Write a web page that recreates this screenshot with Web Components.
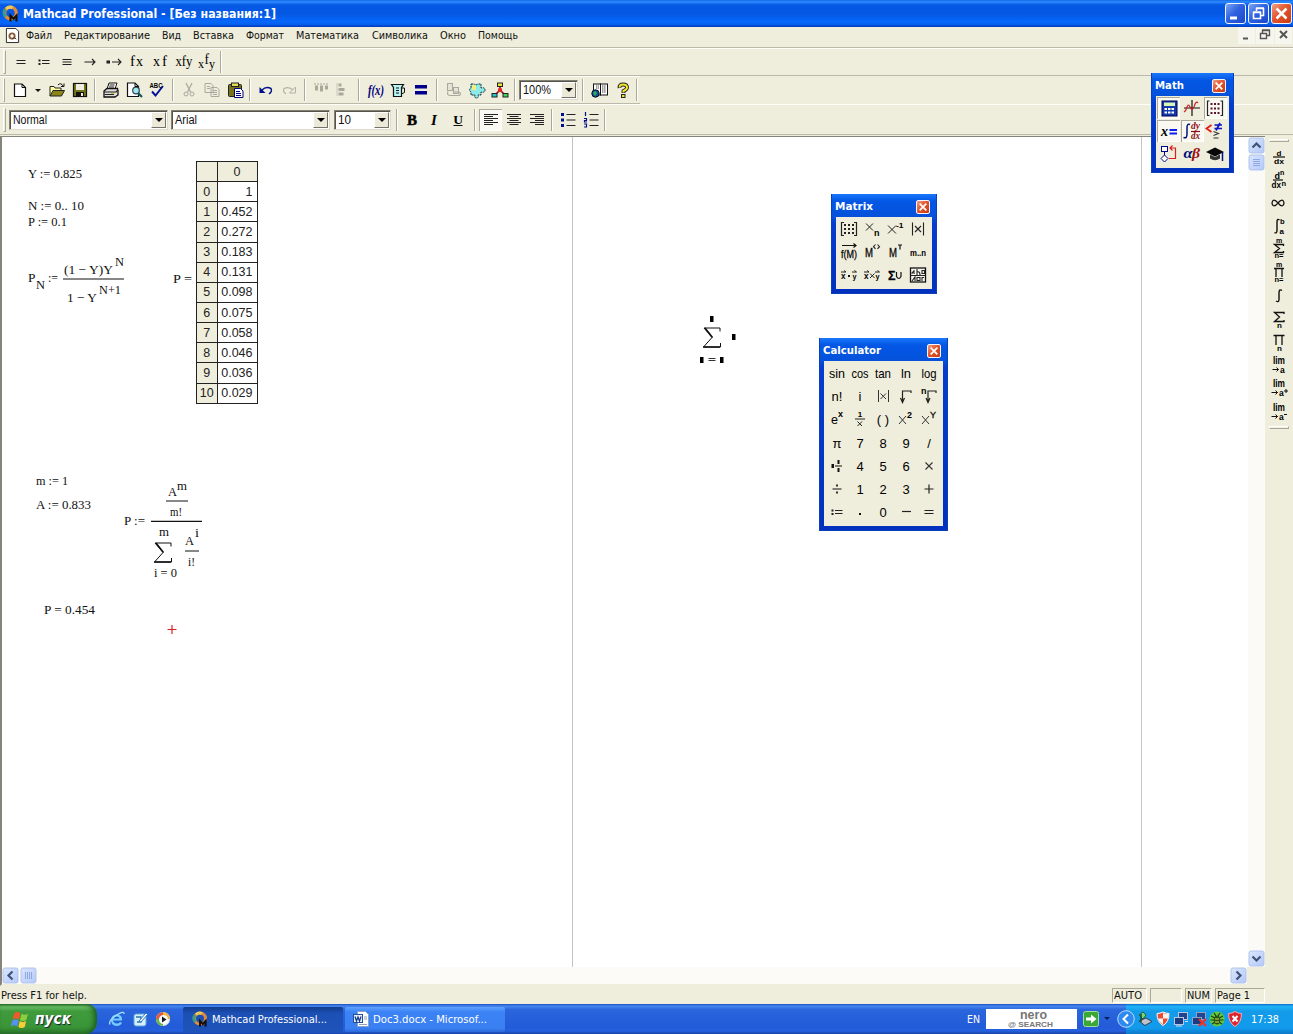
<!DOCTYPE html>
<html lang="ru">
<head>
<meta charset="utf-8">
<title>Mathcad Professional</title>
<style>html,body{margin:0;padding:0;overflow:hidden;background:#efeddd}</style>
</head>
<body>
<mathcad-app></mathcad-app>
<script>
const UI = '"DejaVu Sans Condensed","DejaVu Sans",sans-serif';
const SANS = '"Liberation Sans",sans-serif';
const SERIF = '"Liberation Serif",serif';

/* SVG text with a fixed advance width */
const t = (x, y, s, size, w, o = '') =>
  `<text x="${x}" y="${y}" font-size="${size}" ${w ? `textLength="${w}" lengthAdjust="spacingAndGlyphs"` : ''} ${o}>${s}</text>`;
const mid = 'text-anchor="middle"';
const bold = 'font-weight="bold"';
const ln = (d, c = '#111', w = 1, o = '') => `<path d="${d}" fill="none" stroke="${c}" stroke-width="${w}" ${o}/>`;
const bx = (x, y, w, h, f, s = 'none', o = '') => `<rect x="${x}" y="${y}" width="${w}" height="${h}" fill="${f}" stroke="${s}" ${o}/>`;
const sf = `font-family='${SERIF}'`;

/* every icon is drawn on a 22 x 22 board centred on 11,11 */
const ICONS = {
  eq: ln('M6.500 9.500h9M6.500 12.500h9', '#222', 1.2),
  def: ln('M9 9.500h7.500M9 12.500h7.500', '#222', 1.2) + bx(5.5, 8.5, 2, 2, '#222') + bx(5.5, 12, 2, 2, '#222'),
  equiv: ln('M6.500 8.500h9M6.500 11h9M6.500 13.500h9', '#222', 1.1),
  arrow: ln('M5.500 11h10.500M13 8l3 3l-3 3', '#222', 1.1),
  dotarrow: bx(3.5, 9.5, 3.5, 3, '#222') + ln('M9 11h9M15 8l3 3l-3 3', '#222', 1.1),
  fx: t(4, 15, 'f', 14, 5, sf) + t(10, 15, 'x', 14, 7, sf), xf: t(4, 15, 'x', 14, 7, sf) + t(13, 15, 'f', 14, 5, sf),
  xfy: t(2.500, 15, 'xfy', 14, 17, sf),
  xfy2: t(2, 17, 'x', 13, 6, sf) + t(8.500, 13, 'f', 14, 4.500, sf) + t(13, 17, 'y', 13, 6, sf),
  new: `<path d="M5.500 5h7.500l3.500 3.500v9h-11z" fill="#fff" stroke="#111" stroke-width="1.200"/>` + ln('M13 5v3.500h3.500'),
  dd: '<path d="M8 10h6l-3 3z" fill="#111"/>',
  open: `<path d="M4 17V7.500h4l1 1.500h6v3" fill="#ffffa0" stroke="#222"/><path d="M4 17l3-5.500h11.500L15.500 17z" fill="#8a8418" stroke="#222"/>` + ln('M12 6q3-3 5 1M18 4.500v3h-3'),
  save: bx(4.500, 4.500, 13, 13, '#74741c', '#111', 'stroke-width="1.200"') + bx(7, 5, 8, 6, '#efeddd') + bx(7, 13, 8, 4.500, '#111') + bx(12, 14, 2, 3, '#efeddd'),
  print: `<path d="M7 10l2-6h8l-2 6" fill="#fff" stroke="#111"/><path d="M4 12l3-2.500h10.500L18 12v4l-3 2H4z" fill="#ddd" stroke="#111" stroke-width="1.300"/>` + ln('M9.500 6h5M9 8h5M4 13h12l2-2M5 15.500h9', '#222', 1.200) + bx(11, 14, 3, 1, '#c9c920'),
  preview: `<path d="M4.500 4h7.500l3.500 3.500V17.500h-11z" fill="#fff" stroke="#111" stroke-width="1.200"/><circle cx="13" cy="11.500" r="3.300" fill="#9fe8ee" stroke="#345" stroke-width="1.200"/>` + ln('M15 14l4 4', '#155', 2.200) + ln('M12 4v3.500h3.500'),
  spell: t(3.500, 8.500, 'ABC', 6.500, 13, bold) + ln('M6 12.500l3.500 4L17 7', '#00109c', 1.900),
  cut: ln('M8 4l4.500 9M14 4l-4.500 9', '#aaa89c', 1.200) + '<circle cx="8" cy="15" r="2" fill="none" stroke="#aaa89c"/><circle cx="14" cy="15" r="2" fill="none" stroke="#aaa89c"/>',
  copy: '<path d="M4 4.500h6l2 2v7H4zM10 8.500h6l2 2v7h-8z" fill="#efeddd" stroke="#aaa89c"/>' + ln('M6 7.500h3M6 9.500h3M12 11.500h4M12 13.500h4M12 15.500h4', '#aaa89c'),
  paste: bx(4.500, 5.500, 13, 12, '#77731b', '#222', 'rx="1"') + bx(7.500, 4, 7, 3.500, '#e6df55', '#222') + '<path d="M10.500 9.500h6l2.500 2.500v6.500h-8.500z" fill="#fff" stroke="#000080"/>' + ln('M12 12.500h4M12 14.500h5M12 16.500h5', '#000080'),
  undo: ln('M7 11q4-4 9-1.500q1.500 3-2 5.500', '#00108c', 1.400) + '<path d="M4.500 8v6h6z" fill="#00108c"/>',
  redo: ln('M15 11q-4-4-9-1.500q-1.500 3 2 5.500', '#b4b2a6', 1.200) + '<path d="M17.500 8v6h-6z" fill="none" stroke="#b4b2a6"/>',
  alh: ln('M4 5h14', '#aaa89c', 1.200, 'stroke-dasharray="2 1"') + bx(5, 6.500, 3, 5, '#aaa89c') + bx(10, 6.500, 3, 6, '#aaa89c') + bx(15, 6.500, 3, 4, '#aaa89c'),
  alv: bx(6.500, 4.500, 3, 3, '#aaa89c') + bx(6.500, 9, 6, 3, '#aaa89c') + bx(6.500, 13.500, 5, 3, '#aaa89c') + ln('M5 4v13', '#c8c6ba'),
  func: t(3, 15.500, 'f(x)', 14, 16, `${sf} font-weight="bold" font-style="italic" fill="#00007c"`),
  cup: '<path d="M4.500 5.500h12l-2 3v9h-8v-9z" fill="#b8f4f4" stroke="#111" stroke-width="1.200"/>' + ln('M14.500 9h3v4.500l-3 1.500M9 9h3M9 11.500h3M9 14h3'),
  calc: bx(5, 6, 12, 3.500, '#00008c') + bx(5, 12, 12, 3.500, '#00008c'),
  link: bx(4.500, 4.500, 5, 7, '#e5e3d7', '#aaa89c') + bx(10.500, 8.500, 5, 6, '#e5e3d7', '#aaa89c') + ln('M5 12.500q-2 4 3 4h8q3-2 0-3.500h-5', '#aaa89c', 1.200),
  puzzle: '<path d="M5 5h3.500q1.500 2 3 0H15v4q4-1 4 2t-4 2v3h-3q1 3-1.500 3T9 16H5v-3q-3-2 0-4z" fill="#8fe9e4" stroke="#134" stroke-dasharray="2 .7"/><path d="M6 6h4v5H6z" fill="#f0f080"/>',
  tree: ln('M11 6v5M11 11l-5 5M11 11l5 5', '#8c1111', 1.600) + bx(8.500, 4, 5, 3.500, '#f2e33c', '#222') + bx(3, 14.500, 5, 3.500, '#24c8c8', '#222') + bx(14, 14.500, 5, 3.500, '#42d35a', '#222') + '<circle cx="11" cy="11" r="2.200" fill="#e42828"/>',
  book: bx(4.500, 5, 7, 11, '#fff', '#111') + bx(11.500, 5, 7, 11, '#fff', '#111') + ln('M13 7h4M13 9h4M13 11h4M13 13h4M7 7h3M7 9h3', '#444', 1, 'stroke-dasharray="1.500 .6"') + '<circle cx="6.500" cy="14.500" r="3.700" fill="#174c93" stroke="#012"/><path d="M4 14l2-2 2 2-2 3z" fill="#2cb35a"/>',
  help: ln('M7.500 9Q7 5.500 11 5.500t4 3Q15 10.500 11.500 12v2', '#222', 3.800) + ln('M7.800 8.500Q7 5.500 11 5.500t4 3Q15 10.500 11.500 12v1.500', '#f3e52d', 2) + bx(9.500, 15.500, 3.500, 3, '#f3e52d', '#222'),
  b: t(11, 15.500, 'B', 15, 0, `${sf} ${bold} ${mid} stroke="#000" stroke-width=".5"`),
  i: t(11, 15.500, 'I', 15, 0, `${sf} ${bold} ${mid} font-style="italic"`),
  u: t(11, 14.500, 'U', 13.500, 0, `${sf} ${bold} ${mid}`) + bx(6.500, 16, 9, 1, '#111'),
  left: ln('M4 5.500h14M4 7.500h9M4 9.500h14M4 11.500h9M4 13.500h14M4 15.500h9', '#222'),
  center: ln('M4 5.500h14M6.500 7.500h9M4 9.500h14M6.500 11.500h9M4 13.500h14M6.500 15.500h9', '#222'),
  right: ln('M4 5.500h14M9 7.500h9M4 9.500h14M9 11.500h9M4 13.500h14M9 15.500h9', '#222'),
  bul: bx(4, 4, 3, 3, '#00108c') + bx(4, 9.500, 3, 3, '#00108c') + bx(4, 15, 3, 3, '#00108c') + ln('M9.500 5.500h9M9.500 11h9M9.500 16.500h9', '#222', 1.200),
  num: ln('M5.500 3v4M4 9.500h2.500v2h-2v1.500h2.500M4 15h2.500v3H4', '#00108c', 1.200) + ln('M9.500 5.500h9M9.500 11h9M9.500 16.500h9', '#222', 1.200),

  dx: t(11, 9.500, 'd', 8, 0, `${mid} ${bold}`) + ln('M5 11h12', '#111', 1.200) + t(11, 18, 'dx', 8, 10, `${mid} ${bold}`),
  dnx: t(6.500, 9.500, 'd', 9, 0, bold) + t(12, 6, 'n', 7, 0, bold) + ln('M5 11h10', '#111', 1.200) + t(3.500, 19, 'dx', 8.500, 9.500, bold) + t(13.500, 16.500, 'n', 7.500, 0, bold),
  inf: ln('M11 11Q8 7.300 6 8.500q-2 2.500 0 5Q8 14.700 11 11Q14 7.300 16 8.500q2 2.500 0 5Q14 14.700 11 11', '#111', 1.200, 'transform="translate(-1 0)"'),
  intab: ln('M11.500 5Q9 3 9 7v8q0 4-2.500 2.500', '#111', 1.400) + t(12, 9, 'b', 7.500, 0, bold) + t(11.500, 19, 'a', 8, 0, bold),
  summn: t(11, 5, 'm', 7, 0, `${mid} ${bold}`) + ln('M15.500 8V6.500h-9l5 4l-5 4h9V13', '#111', 1.300) + t(11, 20, 'n=', 7, 9, `${mid} ${bold}`),
  prodmn: t(11, 5, 'm', 7, 0, `${mid} ${bold}`) + ln('M6 6.500h10M8 7v8M14 7v8', '#111', 1.300) + t(11, 20, 'n=', 7, 9, `${mid} ${bold}`),
  int: ln('M14 5.500Q11 3.500 11 8v6q0 4-3 2', '#111', 1.400),
  sumn: ln('M16 6V4.500H6.500l5 4.500l-5 4.500H16V12', '#111', 1.300) + t(11.500, 20, 'n', 8, 0, `${mid} ${bold}`),
  prodn: ln('M5.500 4.500h11M8 5v9M14 5v9', '#111', 1.300) + t(11.500, 20, 'n', 8, 0, `${mid} ${bold}`),
  lim: t(5, 10, 'lim', 10, 12, bold) + ln('M4.500 15.500h6M8.500 13.500l2 2l-2 2') + t(12, 18.500, 'a', 8.500, 0, bold),
  limp: t(5, 10, 'lim', 10, 12, bold) + ln('M3.500 15.500h6M7.500 13.500l2 2l-2 2M16 14h4M18 12v4') + t(11, 18.500, 'a', 8.500, 0, bold),
  limm: t(5, 10, 'lim', 10, 12, bold) + ln('M3.500 15.500h6M7.500 13.500l2 2l-2 2M16 13.500h3') + t(11, 18.500, 'a', 8.500, 0, bold),

  mcalc: bx(4, 4, 15, 15, '#123aa8', '#000050') + bx(6, 5.500, 11, 3.500, '#d9f5b6') + [6.500, 10, 13.500].map(x => [11, 14.500].map(y => bx(x, y, 2.500, 2, '#fff')).join('')).join(''),
  mgraph: ln('M11 3v16M3 11h16', '#111', 1.200) + ln('M3 15q2-1 3-5q1.500-4 3 0q2 5 4 0q2-7 4-4', '#d02424', 1.200),
  mmat: ln('M5.500 4H3.500v14.500h2M16.500 4h2v14.500h-2', '#222', 1.200) + [6.500, 10, 13.500].map(x => [6, 10.500, 15].map(y => bx(x, y, 2, 2, '#5b1530')).join('')).join(''),
  meq: t(3, 15.500, 'x', 14, 7, `${sf} font-style="italic" ${bold}`) + ln('M11.500 10h7.500M11.500 13.500h7.500', '#0c1df2', 1.900),
  mint: ln('M9 4.500Q6 3 6 8v6q0 5-3.500 3.500', '#00107c', 1.500) + t(10, 9, 'dy', 10, 9, `${sf} font-style="italic" ${bold} fill="#8d1010"`) + ln('M10 11.500h9', '#8d1010', 1.200) + t(10, 19, 'dx', 10, 9, `${sf} font-style="italic" ${bold} fill="#8d1010"`),
  mbool: ln('M7.500 5l-5 3.500l5 3.500', '#df1d1d', 1.800) + ln('M10.500 5h7.500M10.500 8.500h7.500M16 3l-4 7.500', '#0817c8', 1.700) + ln('M9.500 11.500l5 2l-5 2M9.500 18h5', '#333', 1.100),
  mprog: bx(3.500, 3.500, 6, 5, '#fff', '#000a90') + '<path d="M6.500 12l3.500 3.500l-3.500 3.500L3 15.500z" fill="#fff" stroke="#000a90"/>' + ln('M6.500 9v3', '#000a90') + ln('M11 15.500h6.500V5h-5M14.500 2.500L12 5l2.500 2.500', '#d81e1e', 1.200),
  mgreek: t(2.500, 15, 'α', 15, 9, `${sf} font-style="italic" ${bold} fill="#00107c"`) + t(11, 15, 'β', 15, 8, `${sf} font-style="italic" ${bold} fill="#a01010"`),
  mcap: '<path d="M2 9l9-4.500L20 9l-9 4.500z" fill="#080808"/><path d="M6 11.500v4q5 3.500 10 0v-4l-5 2.500z" fill="#333"/>' + ln('M18.500 9v9', '#00108c', 1.500),

  xmat: ln('M6 4.500H3.500v13H6M16 4.500h2.500v13H16', '#222', 1.200) + [6, 10, 14].map(x => [6, 10, 14].map(y => bx(x, y, 2, 2, '#222')).join('')).join(''),
  xn: ln('M5 5.500l7 7M12 5.500l-7 7', '#222') + t(13, 17.500, 'n', 9, 0, bold),
  xinv: ln('M4 7.500l8 8M12 7.500l-8 8', '#222') + t(12, 9.500, '-1', 8, 7.500, bold),
  xabs: ln('M5.500 4.500v13M16.500 4.500v13M8 8l6 6M14 8l-6 6', '#222', 1.100),
  fm: ln('M4 4.500h14M15.500 2.500l2.500 2l-2.500 2', '#111', 1.200) + t(3, 17, 'f(M)', 11, 16, 'stroke="#111" stroke-width=".3"'),
  mcol: t(4, 15.500, 'M', 12, 8, 'stroke="#111" stroke-width=".3"') + ln('M14.500 3.500l-2 2.200l2 2.200M16.500 3.500l2 2.200l-2 2.200', '#222', 1.100),
  mt: t(5, 15.500, 'M', 12, 8, 'stroke="#111" stroke-width=".3"') + ln('M14 4h4M16 4v4.500', '#111', 1.200),
  mn: t(3, 14.500, 'm..n', 9, 16, bold),
  dot: t(3, 15, 'x', 8.500, 4.500, bold) + ln('M3 8h5M6 6.500l2 1.500M14 8h4.500M16.500 6.500l2 1.500', '#222') + bx(10, 11, 2, 2, '#111') + t(14.500, 14.500, 'y', 8, 4, bold),
  cross: t(3, 15, 'x', 8.500, 4.500, bold) + ln('M3 8h5M6 6.500l2 1.500M14 8h4.500M16.500 6.500l2 1.500M9 9.500l4.500 4.500M13.500 9.500l-4.500 4.500', '#222') + t(14.500, 14.500, 'y', 8, 4, bold),
  sumu: t(4, 15.500, 'Σ', 12, 7.500, `${bold} stroke="#111" stroke-width=".3"`) + ln('M12.500 8v4.500q2.300 4 4.500 0V8', '#111', 1.200),
  pic: bx(3.500, 4, 15, 14, '#f8f8ef', '#111', 'stroke-width="1.300"') + ln('M3.500 11.500h15M7 6v4M5 10q0-2.500 2-2M10 5v6M10 8q3-1 3 3M15 6.500h2.500v3H15zM5 17l3-4v4M10 13.500h3v3h-3zM15 17v-3.500h2', '#222', 1.100),

  abs: ln('M6.500 5v12M16.500 5v12M8.500 8.500l5.500 5.500M14 8.500l-5.500 5.500', '#333'),
  sqrt: ln('M7.500 11.500v6.500V6H16v2M5.500 13l2 4.500l2-4.500', '#222', 1.200),
  nroot: t(3, 9, 'n', 9, 0, bold) + ln('M10 11.500v6.500V6h8v2M8 13l2 4.500l2-4.500', '#222', 1.200),
  ex: t(5, 16, 'e', 13, 7) + t(12, 9, 'x', 9, 0, bold),
  inv: t(11, 9, '1', 8, 0, `${mid} ${bold}`) + ln('M6 11h10M8.500 13.500l4.500 4.500M13 13.500l-4.500 4.500', '#222'),
  sq: ln('M4 8l7 8M11 8l-7 8', '#333') + t(12, 10, '2', 9, 0, bold),
  pow: ln('M4 8l7 8M11 8l-7 8', '#333') + t(12, 9.500, 'Y', 9, 0, 'stroke="#111" stroke-width=".3"'),
  mixed: bx(5.500, 9, 2.500, 4, '#111') + ln('M9 11h7', '#111') + bx(11.500, 5, 2, 4, '#111') + bx(11.500, 13, 2, 4, '#111'),
  div: ln('M6.500 11h9', '#333', 1.200) + bx(10, 6.500, 2, 2, '#333') + bx(10, 13.500, 2, 2, '#333'),
  mul: ln('M7.500 7.500l7 7M14.500 7.500l-7 7', '#333', 1.100),
  plus: ln('M6.500 11h9M11 6.500v9', '#222', 1.200),
  minus: ln('M7 10.500h9', '#222', 1.200),
  pt: bx(10, 12, 2, 2, '#111'),
  sin: t(11, 15.500, 'sin', 13, 16, mid), cos: t(11, 15.500, 'cos', 13, 17, mid), tan: t(11, 15.500, 'tan', 13, 16, mid),
  ln_: t(11, 15.500, 'ln', 13, 10, mid), log: t(11, 15.500, 'log', 13, 15, mid),
};
for (const [k, s] of Object.entries({ fact: 'n!', im: 'i', par: '( )', pi: 'π', slash: '/' })) ICONS[k] = t(11, 15.500, s, 13, 0, mid);
for (let n = 0; n < 10; n++) ICONS['n' + n] = t(11, 15.500, n, 13, 0, mid);

const LOGO = `<circle cx="8" cy="7.500" r="5.500" fill="none" stroke="#e5893a" stroke-width="3"/><path d="M3.500 11a5.500 5.500 0 0 1-.5-7" fill="none" stroke="#3d9b84" stroke-width="3"/><path d="M4 3.500a5.500 5.500 0 0 1 6-1" fill="none" stroke="#e9cb5c" stroke-width="3"/><path d="M8 15.500V10l2.800 3l2.800-3v5.500" fill="none" stroke="#171008" stroke-width="2"/>`;
const PICS = {
  logo: LOGO,
  doc: `<path d="M1.500.5h10l3 3v12h-13z" fill="#fff" stroke="#222"/><circle cx="7.500" cy="8.500" r="2.800" fill="none" stroke="#8d5a35" stroke-width="2"/><path d="M8 12l2-2l2 2" stroke="#333" fill="none"/>`,
  flag: `<path d="M2 2q3-2 6 0l-1.500 6q-3-2-6 0z" fill="#ef5a2a"/><path d="M9 2.500q3 2 6 0L13.500 8.500q-3 2-6 0z" fill="#8ccf3c"/><path d="M.3 9q3-2 6 0L5 14.500q-3-2-6 0z" fill="#5590f2"/><path d="M7.300 9.500q3 2 6 0L12 15q-3 2-6 0z" fill="#f9ce35"/>`,
  ie: `<path d="M13 9.500H4q.5 3 4 3q2 0 3-1.500l2 1q-1.500 3-5.500 3Q2 14.500 2 9q.5-5.500 6-5.500T13 9.500z" fill="#73cbff"/><path d="M4.500 7.500h6q-.5-2-3-2t-3 2z" fill="#1d55c8"/><path d="M1 13.500Q-1 10 7 4.500T15 3" fill="none" stroke="#a9e0ff" stroke-width="1.300"/>`,
  desk: `<rect x="2" y="3" width="12" height="12" rx="2" fill="#d6eefb" stroke="#5da5dc"/><path d="M4 6h5v5H5" fill="none" stroke="#2676b4" stroke-width="1.300"/><path d="M7 10l7-8l1.500 1.500L9 11z" fill="#fff" stroke="#2b79bb"/>`,
  wmp: `<circle cx="8" cy="8" r="7" fill="#e8edf0"/><path d="M8 1a7 7 0 0 1 7 7l-7 0z" fill="#f4b43c"/><path d="M1 8a7 7 0 0 1 7-7v7z" fill="#dc5b46"/><path d="M1 8a7 7 0 0 0 7 7V8z" fill="#6ab645"/><circle cx="8.500" cy="8.500" r="4.500" fill="#f8fafd"/><path d="M7 5.500l4.500 3l-4.500 3z" fill="#15181f"/>`,
  word: `<path d="M4.500.5h8l3 3v12h-11z" fill="#fff" stroke="#8ba2c8"/><path d="M11 6h3M11 8h3M6 13.500h8" stroke="#91a0b7"/><rect x=".5" y="3.500" width="9" height="8" fill="#eaf1fc" stroke="#224f99"/><path d="M2 5.500l1.500 4.500L5 6l1.500 4L8 5.500" fill="none" stroke="#173e8c" stroke-width="1.300"/>`,
  go: `<rect x=".5" y=".5" width="15" height="15" rx="2" fill="#39a835" stroke="#a5dda0"/><path d="M3 6.500h5V3.500L13.500 8L8 12.500v-3H3z" fill="#fff"/>`,
  usb: `<path d="M2 4l4-3l3 3l-3 4z" fill="#79d37a" stroke="#1d6140"/><path d="M2 10l7-3l6 3.500l-7 4z" fill="#bfc3c9" stroke="#2f3f54"/><path d="M4 3v8" stroke="#154a2e" stroke-width="1.500"/>`,
  shield: `<path d="M8 1q3 1.500 6 1.500q0 8.500-6 12Q2 11 2 2.500Q5 2.500 8 1z" fill="#e84c35" stroke="#fff"/><path d="M8 2v5.500H13.500Q14 5 13.500 3Q10 3 8 2zM8 7.500v6Q4 11 3 7.500z" fill="#fff3ea"/>`,
  net: `<rect x="5.500" y="1.500" width="9" height="7" fill="#22458f" stroke="#b9c6e2"/><rect x="1.500" y="6.500" width="9" height="7" fill="#1b3b83" stroke="#b9c6e2"/><path d="M3 15h6M12 10.500h3" stroke="#d7dce8"/>`,
  netx: `<rect x="5.500" y="1.500" width="9" height="7" fill="#22458f" stroke="#8fa2cc"/><rect x="1.500" y="6.500" width="9" height="7" fill="#1b3b83" stroke="#8fa2cc"/><path d="M8 8l7 7M15 8l-7 7" stroke="#ef3225" stroke-width="2.200"/>`,
  bug: `<circle cx="8" cy="8" r="7.500" fill="#62c93c"/><path d="M2 5l4 2M14 5l-4 2M1.500 9H14.500M3 13l3-2M13 13l-3-2M5 2l2 3M11 2L9 5" stroke="#193b10" stroke-width="1.200"/><ellipse cx="8" cy="9" rx="3.200" ry="4.500" fill="#24521a"/><path d="M6 8h4M6 11h4" stroke="#e9e13c"/>`,
  redsh: `<path d="M8 .5q3 2 6.500 2q0 9-6.500 13Q1.500 11.500 1.500 2.500Q5 2.500 8 .5z" fill="#dd2431" stroke="#f4aeb0"/><path d="M5.500 5l5 5.500M10.500 5l-5 5.500" stroke="#fff" stroke-width="2"/>`,
};

const make = (tag, render) => customElements.define(tag, class extends HTMLElement {
  connectedCallback() {
    if (this.shadowRoot) return;
    this.attachShadow({ mode: 'open' }).innerHTML = render(this);
  }
});
const at = (e, n, d = '') => e.getAttribute(n) ?? d;

/* a line of text fitted to the width it is given */
make('fit-text', e => {
  const w = +at(e, 'w'), s = +at(e, 's', 11.5), h = Math.ceil(s * 1.3);
  return `<style>:host{display:block;flex:none;width:${w}px;height:${h}px}svg{display:block;overflow:visible}</style>
  <svg width="${w}" height="${h}"><text x="0" y="${s}" font-size="${s}" fill="currentColor" textLength="${w}" lengthAdjust="spacingAndGlyphs">${e.textContent}</text></svg>`;
});

make('tool-icon', e => `<style>:host{display:flex;align-items:center;justify-content:center;flex:none;width:${at(e, 'w', 23)}px;height:22px;font-family:${SANS}}
:host([on]){background:#f9f8f1;box-shadow:inset 1px 1px #aaa79b,inset -1px -1px #fff}svg{display:block;overflow:visible;flex:none}</style>
<svg width="22" height="22" viewBox="0 0 22 22">${ICONS[at(e, 'name')]}</svg>`);

make('small-pic', e => `<style>:host{display:block;flex:none;width:${at(e, 's', 16)}px;height:${at(e, 's', 16)}px}svg{display:block;overflow:visible}</style>
<svg width="${at(e, 's', 16)}" height="${at(e, 's', 16)}" viewBox="0 0 16 16">${PICS[at(e, 'name')]}</svg>`);

make('tool-sep', e => `<style>:host{display:flex;justify-content:center;flex:none;width:${at(e, 'w', 9)}px;height:${at(e, 'h', 22)}px}i{width:1px;background:#aba899;border-right:1px solid #fff}</style><i></i>`);

make('tool-bar', () => `<style>:host{display:flex;align-items:center;height:var(--h,29px);box-sizing:border-box;border-top:1px solid #fffffa;border-bottom:1px solid #bcb9aa;padding-left:3px}
.grip{width:1px;height:22px;border:1px solid;border-color:#fff #aba899 #aba899 #fff;margin-right:3px}</style><span class="grip"></span><slot></slot>`);

make('combo-box', e => `<style>:host{display:flex;flex:none;box-sizing:border-box;width:${at(e, 'w')}px;height:20px;margin-right:${at(e, 'gap', 0)}px;background:#fff;border:1px solid #827f73;border-right-color:#dedbcc;border-bottom-color:#dedbcc;box-shadow:inset 1px 1px #55534b;align-items:center;font-family:${SANS};color:#111;padding-left:3px}
.v{flex:1}.b{width:15px;height:16px;box-sizing:border-box;background:#ece9d8;border:1px solid;border-color:#fff #76736a #76736a #fff;display:flex;align-items:center;justify-content:center;margin-right:1px}</style>
<span class="v"><slot></slot></span><span class="b"><svg width="8" height="4"><path d="M0 0h8l-4 4z"/></svg></span>`);

/* caption buttons */
make('win-button', e => {
  const k = at(e, 'kind'), s = +at(e, 's', 21), red = k === 'close';
  const g = { min: '<path d="M5 15h7" stroke="#fff" stroke-width="3"/>', max: '<path d="M8.500 8V5.500h7v7H13M5.500 9.500h7v6h-7zM5 9h8M8 5h8" fill="none" stroke="#fff" stroke-width="1.600"/>', close: '<path d="M5.500 5.500l10 10M15.500 5.500l-10 10" stroke="#fff" stroke-width="2.600"/>' }[k];
  return `<style>:host{display:block;flex:none;box-sizing:border-box;width:${s}px;height:${s}px;border-radius:${s / 7}px;border:1px solid #f2f4ff;background:${red ? 'linear-gradient(135deg,#f0a083,#e2562e 45%,#c83c12)' : 'linear-gradient(135deg,#7da5f4,#2e62e0 45%,#1b48c8)'}}svg{display:block;margin:-1px}</style><svg width="${s}" height="${s}" viewBox="0 0 21 21">${g}</svg>`;
});

make('title-bar', () => `<style>:host{display:flex;align-items:center;height:27px;box-sizing:border-box;padding:0 1px 1px 2px;color:#fff;font-family:${UI};font-weight:bold;background:linear-gradient(#1468e4 0,#2c8cff 7%,#0659e4 18%,#0457e2 50%,#0667fb 80%,#0560ee 90%,#0038b8)}
fit-text{margin-left:4px}.g{flex:1}.w{display:flex;gap:2px}</style><small-pic name="logo" s="17"></small-pic><fit-text w="253" s="12.500">Mathcad Professional - [Без названия:1]</fit-text><span class="g"></span><span class="w"><win-button kind="min"></win-button><win-button kind="max"></win-button><win-button kind="close"></win-button></span>`);

make('menu-bar', () => {
  const m = [['Файл', 26], ['Редактирование', 86], ['Вид', 19], ['Вставка', 41], ['Формат', 38], ['Математика', 63], ['Символика', 56], ['Окно', 26], ['Помощь', 40]];
  return `<style>:host{display:flex;align-items:center;height:21px;box-sizing:border-box;border-bottom:1px solid #bcb9aa;padding:0 0 3px 5px;font-family:${UI};color:#111}
fit-text{margin-right:12.1px}small-pic{margin-right:6px}.g{flex:1}.b{display:flex;gap:1px;margin-right:1px}.b svg{background:#f7f6ee}</style><small-pic name="doc" s="15"></small-pic>${m.map(x => `<fit-text w="${x[1]}" s="11">${x[0]}</fit-text>`).join('')}<span class="g"></span><span class="b">
<svg width="17" height="17"><path d="M5 11.500h5" stroke="#555" stroke-width="2"/></svg><svg width="18" height="17"><path d="M6.500 6V3.500h7v5H11M4.500 6.500h6v5h-6zM4 6.500h7M6 3h8" fill="none" stroke="#555" stroke-width="1.400"/></svg><svg width="17" height="17"><path d="M5 4l7 7M12 4l-7 7" stroke="#555" stroke-width="2"/></svg></span>`;
});

const ic = (s) => s.split(' ').map(x => {
  const [n, w] = x.split(':');
  return n === '|' ? `<tool-sep w="${w}"></tool-sep>` : `<tool-icon name="${n}" w="${w || 23}"></tool-icon>`;
}).join('');

make('tool-rows', () => `<style>:host{display:block;height:88px}</style>
<tool-bar style="--h:28px">${ic('eq:23 def:23 equiv:23 arrow:24 dotarrow:23 fx:23 xf:24 xfy:23 xfy2:23 |:6')}</tool-bar>
<tool-bar style="--h:28px;width:640px">${ic('new dd:14 open save |:8 print preview spell |:9 cut copy paste |:8 undo redo |:9 alh alv:21 |:12 func:21 cup calc |:10 link puzzle tree |:8')}<combo-box w="59"><fit-text w="28" s="12">100%</fit-text></combo-box>${ic('|:10 book help |:6')}</tool-bar>
<tool-bar style="--h:31px"><combo-box w="159" gap="3"><fit-text w="34" s="12">Normal</fit-text></combo-box><combo-box w="159" gap="4"><fit-text w="22" s="12">Arial</fit-text></combo-box><combo-box w="57"><fit-text w="13" s="12">10</fit-text></combo-box>${ic('|:12 b:18 i:25 u:24 |:9')}<tool-icon name="left" on></tool-icon>${ic('center right |:8 bul num |:6')}</tool-bar>`);

make('scroll-button', e => `<style>:host{display:block;flex:none}svg{display:block}</style><svg width="17" height="17"><defs><linearGradient id="g" x2="1" y2="1"><stop stop-color="#dbe6fe"/><stop offset="1" stop-color="#b4c9f8"/></linearGradient></defs><rect x="1" y="1" width="15" height="15" rx="2" fill="url(#g)" stroke="#a5bcee" stroke-width=".8"/>${{
  up: ln('M4.500 10.500l4-4l4 4', '#3f5379', 2.200), down: ln('M4.500 6.500l4 4l4-4', '#3f5379', 2.200), left: ln('M10.500 4.500l-4 4l4 4', '#3f5379', 2.200), right: ln('M6.500 4.500l4 4l-4 4', '#3f5379', 2.200),
  thumb: ln('M5 5.500h7M5 7.500h7M5 9.500h7M5 11.500h7', '#8fa9e4'), hthumb: ln('M5.500 5v7M7.500 5v7M9.500 5v7M11.500 5v7', '#8fa9e4')
}[at(e, 'kind')]}</svg>`);

make('math-region', e => `<style>:host{position:absolute;left:${at(e, 'x')}px;top:${at(e, 'y')}px}::slotted(svg){display:block;overflow:visible}</style><slot></slot>`);

make('result-table', () => {
  const v = ['1', '0.452', '0.272', '0.183', '0.131', '0.098', '0.075', '0.058', '0.046', '0.036', '0.029'];
  return `<style>:host{display:grid;grid-template-columns:19.5px 39px;grid-auto-rows:19.15px;gap:1px;background:#222;border:1px solid #222;width:59.5px;font:12.500px ${SANS};color:#222}
  span{background:#fff;display:flex;align-items:center;justify-content:flex-end;padding-right:4px}.h{background:#efeddb;justify-content:center;padding:0}</style><span class="h"></span><span class="h">0</span>${v.map((x, i) => `<span class="h">${i}</span><span>${x}</span>`).join('')}`;
});

const sigma = (x, y) => `<path d="M${x + 17} ${y + 4.500}v-3.500h-16l8 9.500l-8.500 9.500h17v-4" fill="none" stroke="#111" stroke-width="1"/><path d="M${x + 2} ${y + 1}l7.500 9.500M${x} ${y + 20}h17" stroke="#111" stroke-width="1.600"/>`;
const S = (w, h, c) => `<svg width="${w}" height="${h}" font-family='${SERIF}' fill="#111">${c}</svg>`;
/* text baselines are given relative to the region's own corner */
make('work-sheet', () => `<style>:host{display:block;position:relative;flex:1;overflow:hidden;background:linear-gradient(90deg,transparent 570px,#c5c5c5 570px 571px,transparent 571px 1139px,#c5c5c5 1139px 1140px,transparent 1140px) #fff}</style>
<math-region x="26" y="29">${S(60, 16, t(0, 12, 'Y := 0.825', 13.5, 54))}</math-region>
<math-region x="26" y="61">${S(60, 32, t(0, 12, 'N := 0.. 10', 13.5, 56) + t(0, 28, 'P := 0.1', 13.5, 39))}</math-region>
<math-region x="26" y="117">${S(100, 52, t(0, 28, 'P', 13.5, 7.5) + t(8, 35, 'N', 13.5, 9) + t(20, 28, ':=', 13.5, 10) + ln('M35 25h61', '#111', 1.200) + t(36, 20, '(1 − Y)Y', 13.5, 49) + t(87, 11.5, 'N', 13.5, 9) + t(39, 48, '1 − Y', 13.5, 30) + t(71, 40, 'N+1', 13.5, 22))}</math-region>
<math-region x="171" y="133">${S(20, 16, t(0, 12.5, 'P =', 13.5, 19))}</math-region>
<math-region x="194" y="24"><result-table></result-table></math-region>
<math-region x="697" y="176">${S(40, 50, sigma(4, 14) + bx(11, 3, 3.500, 6, '#000') + bx(33, 21, 3.500, 6, '#000') + bx(1, 44, 3.500, 6, '#000') + bx(21, 44, 3.500, 6, '#000') + ln('M9.500 45.500h7M9.500 47.500h7', '#333'))}</math-region>
<math-region x="34" y="336">${S(60, 40, t(0, 12, 'm := 1', 13.5, 32) + t(0, 36, 'A := 0.833', 13.5, 55))}</math-region>
<math-region x="122" y="341">${S(80, 102, t(0, 47, 'P :=', 13.5, 21) + t(44, 18, 'A', 13.5, 9) + t(53, 11.5, 'm', 13.5, 10) + ln('M42 23h22', '#111') + t(46, 38, 'm!', 13.5, 12) + ln('M27 43.300h51', '#111', 1.200) + t(35, 58, 'm', 13.5, 10) + sigma(30, 64) + t(30, 99, 'i = 0', 13.5, 23) + t(61, 67, 'A', 13.5, 9) + t(71, 59, 'i', 13.5, 4) + ln('M61 73h14', '#111') + t(64, 88, 'i!', 13.5, 7))}</math-region>
<math-region x="42" y="465">${S(60, 16, t(0, 12, 'P = 0.454', 13.5, 51))}</math-region>
<math-region x="165" y="487">${S(10, 10, ln('M.5 5.500h9M5 1v9', '#e02020', 1.200))}</math-region>`);

make('calculus-strip', () => `<style>:host{display:flex;flex-direction:column;align-items:center;flex:none;width:28px;background:#efeddb}i{width:18px;height:1px;border:1px solid;border-color:#fff #aba899 #aba899 #fff;box-sizing:content-box;margin:3px 0}
tool-icon{height:23.2px}</style><i></i>${'dx dnx inf intab summn prodmn int sumn prodn lim limp limm'.split(' ').map(n => `<tool-icon name="${n}"></tool-icon>`).join('')}<i></i>`);

make('status-bar', () => `<style>:host{display:flex;align-items:center;gap:3px;height:18px;background:#efeddb;font-family:${UI};color:#111;padding-left:1px}.g{flex:1}
.p{height:15px;box-sizing:border-box;border:1px solid;border-color:#aca899 #fff #fff #aca899;display:flex;align-items:center;justify-content:flex-start;padding-left:1px;padding-top:1px}</style>
<fit-text w="86" s="11">Press F1 for help.</fit-text><span class="g"></span><span class="p" style="width:35px"><fit-text w="28" s="11">AUTO</fit-text></span><span class="p" style="width:32px"></span><span class="p" style="width:27px"><fit-text w="23" s="11">NUM</fit-text></span><span class="p" style="width:50px"><fit-text w="33" s="11">Page 1</fit-text></span>`);

make('work-area', () => `<style>:host{display:flex;height:868px}.l{width:1265px;display:flex;flex-direction:column}.v{flex:1;display:flex;min-height:0;border-left:2px solid #86847a;border-top:1px solid #86847a}
.vs{width:17px;display:flex;flex-direction:column;background:#fbfaf6}.vs .g,.hs .g{flex:1}.hs{display:flex;height:17px;background:#fcfbf7;border-left:2px solid #86847a;border-bottom:2px solid #efeddb}.c{width:18px;background:#efeddb}</style>
<div class="l"><div class="v"><work-sheet></work-sheet><div class="vs"><scroll-button kind="up"></scroll-button><scroll-button kind="thumb"></scroll-button><span class="g"></span><scroll-button kind="down"></scroll-button></div></div>
<div class="hs"><scroll-button kind="left"></scroll-button><scroll-button kind="hthumb" style="margin-left:1px"></scroll-button><span class="g"></span><scroll-button kind="right"></scroll-button><span class="c"></span></div><status-bar></status-bar></div><calculus-strip></calculus-strip>`);

make('task-button', e => `<style>:host{display:flex;align-items:center;flex:none;box-sizing:border-box;width:160px;height:25px;padding-left:${at(e, 'pad', 9)}px;gap:4px;border-radius:2px;background:linear-gradient(#5ea2ff,#3b82f4 20%,#3a80f2 85%,#2b69d9);color:#fff;margin-right:2px}
:host([on]){background:linear-gradient(#123c8c,#1c50b4 25%,#1e53ba)}</style><slot></slot>`);

make('task-bar', () => `<style>:host{display:flex;align-items:center;height:30px;font-family:${UI};color:#fff;background:linear-gradient(#1c4fbf 0,#4487f0 7%,#2b66dd 18%,#235bd8 75%,#2560dd 90%,#1941a5)}
.st{width:97px;height:30px;box-sizing:border-box;display:flex;align-items:center;padding-left:12px;gap:6px;border-radius:0 10px 12px 0;background:linear-gradient(#2a7a2a,#6cc168 9%,#3f9b3c 24%,#3a9538 75%,#2c7a2c);box-shadow:inset -3px 0 5px #1e5f22;font:italic bold 12px ${UI};text-shadow:1px 1px 1px #123}
.st fit-text{margin-top:-2px}
.q{display:flex;gap:7px;margin:0 12px 0 12px}.g{flex:1}.nero{width:91px;height:20px;background:#fff;margin:0 6px 0 6px}.nero svg{display:block}
.tray{width:167px;height:30px;display:flex;align-items:center;background:linear-gradient(#0c6fd0,#1fb2f6 8%,#139be9 25%,#129aec 80%,#0c78c8);gap:2px;margin-left:13px}.chev{margin-left:-9px;flex:none}</style>
<div class="st"><small-pic name="flag" s="17"></small-pic><fit-text w="36" s="16">пуск</fit-text></div>
<div class="q"><small-pic name="ie"></small-pic><small-pic name="desk"></small-pic><small-pic name="wmp"></small-pic></div>
<task-button on pad="9"><small-pic name="logo"></small-pic><fit-text w="115" s="11">Mathcad Professional...</fit-text></task-button>
<task-button pad="8"><small-pic name="word"></small-pic><fit-text w="114" s="11">Doc3.docx - Microsof...</fit-text></task-button>
<span class="g"></span><fit-text w="13" s="11">EN</fit-text>
<div class="nero"><svg width="91" height="20" font-family='${SANS}' fill="#777">${t(34, 9.500, 'nero', 12, 27, bold)}${t(22, 17.500, '@ SEARCH', 8, 45, bold)}</svg></div>
<small-pic name="go"></small-pic><svg width="10" height="4" style="margin-left:4px"><path d="M1 0h6l-3 3z" fill="#061a55"/></svg>
<div class="tray"><svg class="chev" width="18" height="18"><circle cx="9" cy="9" r="8.300" fill="#2e8af0" stroke="#b9dcff"/><path d="M11 4.500L6.500 9l4.500 4.500" fill="none" stroke="#fff" stroke-width="2"/></svg>
${'usb shield net netx bug redsh'.split(' ').map(n => `<small-pic name="${n}"></small-pic>`).join('')}<fit-text w="28" s="11" style="margin-left:6px">17:38</fit-text></div>`);

/* floating palettes */
make('tool-palette', e => `<style>:host{position:absolute;left:${at(e, 'x')}px;top:${at(e, 'y')}px;width:${at(e, 'w')}px;height:${at(e, 'h')}px;box-sizing:border-box;background:linear-gradient(#1b78fb 0,#0357e4 7px,#0452dc 22px,#063ccf 30px,#0030bd);padding:0 4px 4px;border:1px solid #0c40bb;border-top:0}
.t{height:23px;display:flex;align-items:center;justify-content:space-between;color:#fff;font-family:${UI};font-weight:bold;padding-right:${at(e, 'cr', 2)}px;padding-top:2px;box-sizing:border-box}.t fit-text{margin-left:-1px}
.b{height:calc(100% - 23px);background:#efeddb;display:grid;grid-template-columns:repeat(${at(e, 'cols')},23.2px);grid-auto-rows:${at(e, 'rh', 23)}px;justify-content:center;align-content:start;align-items:center;box-sizing:border-box}tool-icon{width:23px;margin-left:-.3px}</style>
<div class="t"><fit-text w="${at(e, 'tw')}" s="11">${at(e, 'caption')}</fit-text><win-button kind="close" s="14"></win-button></div>
<div class="b">${at(e, 'items').split(' ').map(n => `<tool-icon name="${n.replace('*', '')}" ${n.includes('*') ? 'on' : ''}></tool-icon>`).join('')}</div>`);

make('mathcad-app', () => `<style>:host{display:flex;flex-direction:column;position:relative;width:1293px;height:1034px;background:#efeddb;overflow:hidden}title-bar,menu-bar,tool-rows,work-area,task-bar{flex:none}</style>
<title-bar></title-bar><menu-bar></menu-bar><tool-rows></tool-rows><work-area></work-area><task-bar></task-bar>
<tool-palette x="1151" y="73" w="83" h="100" cols="3" tw="29" cr="3" caption="Math" items="mcalc* mgraph mmat* meq* mint* mbool mprog mgreek mcap"></tool-palette>
<tool-palette x="831" y="194" w="106" h="100" cols="4" tw="38" caption="Matrix" items="xmat xn xinv xabs fm mcol mt mn dot cross sumu pic"></tool-palette>
<tool-palette x="819" y="338" w="129" h="193" cols="5" tw="58" rh="23.3" caption="Calculator" items="sin cos tan ln_ log fact im abs sqrt nroot ex inv par sq pow pi n7 n8 n9 slash mixed n4 n5 n6 mul div n1 n2 n3 plus def pt n0 minus eq"></tool-palette>`);
</script>
</body>
</html>
